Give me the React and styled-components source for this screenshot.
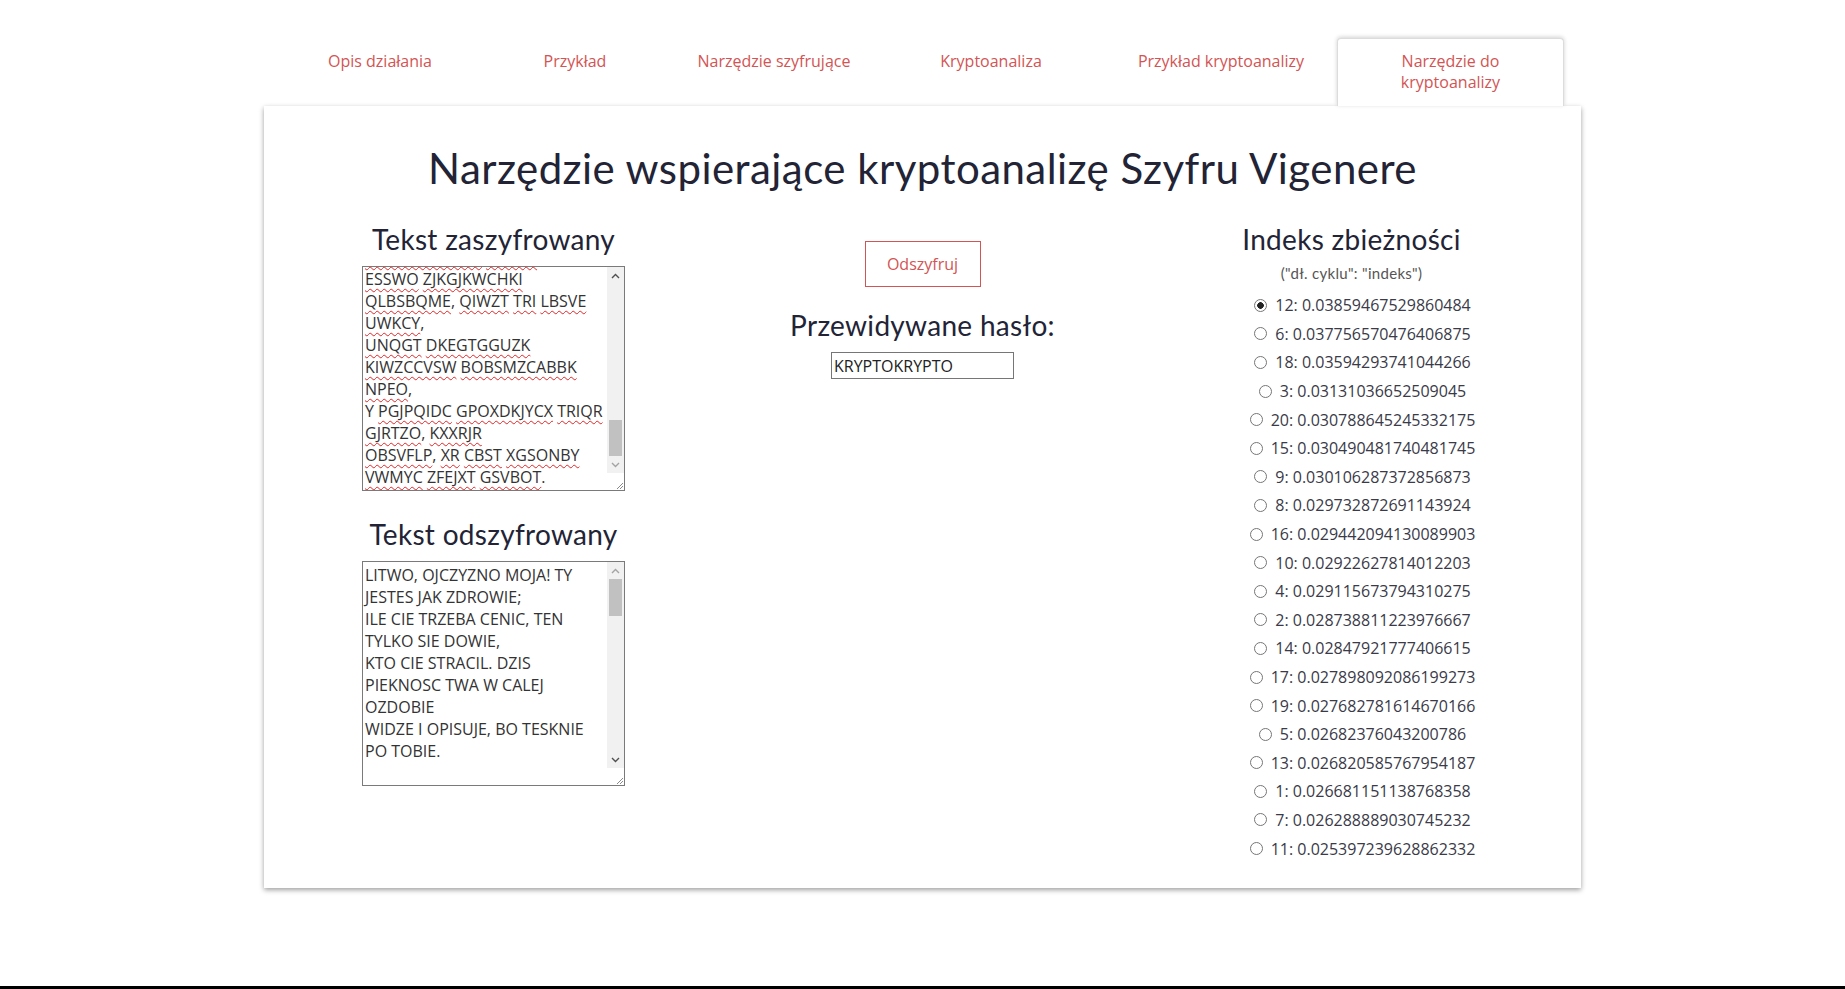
import React, { useLayoutEffect, useRef, useState } from 'react'
import styled, { createGlobalStyle } from 'styled-components'

const GlobalStyle = createGlobalStyle`
    html, body {
        margin: 0;
        padding: 0;
        background: #fff;
    }
    body {
        font-family: "Open Sans", "Liberation Sans", sans-serif;
        color: #333;
    }
`

const TABS = [
    { label: 'Opis działania', width: 198 },
    { label: 'Przykład', width: 192 },
    { label: 'Narzędzie szyfrujące', width: 206 },
    { label: 'Kryptoanaliza', width: 228 },
    { label: 'Przykład kryptoanalizy', width: 232 },
    { label: 'Narzędzie do kryptoanalizy', width: 227, active: true },
]

const PLAIN = [
    'LITWO, OJCZYZNO MOJA! TY JESTES JAK ZDROWIE;',
    'ILE CIE TRZEBA CENIC, TEN TYLKO SIE DOWIE,',
    'KTO CIE STRACIL. DZIS PIEKNOSC TWA W CALEJ OZDOBIE',
    'WIDZE I OPISUJE, BO TESKNIE PO TOBIE.',
    '',
    'PANNO SWIETA, CO JASNEJ BRONISZ CZESTOCHOWY',
    'I W OSTREJ SWIECISZ BRAMIE! TY, CO GROD ZAMKOWY',
    'NOWOGRODZKI OCHRANIASZ Z JEGO WIERNYM LUDEM!',
    'JAK MNIE DZIECKO DO ZDROWIA POWROCILAS CUDEM',
    '(GDY OD PLACZACEJ MATKI, POD TWOJE OPIEKE',
    'OFIAROWANY, MARTWA PODNIOSLEM POWIEKE;',
    'I ZARAZ MOGLEM PIESZO, DO TWYCH SWIATYN PROGU',
    'ISC ZA WROCONE ZYCIE PODZIEKOWAC BOGU),',
    'TAK NAS POWROCISZ CUDEM NA OJCZYZNY LONO.',
    'TYMCZASEM PRZENOS MOJA DUSZE UTESKNIONA',
    'DO TYCH PAGORKOW LESNYCH, DO TYCH LAK ZIELONYCH,',
    'SZEROKO NAD BLEKITNYM NIEMNEM ROZCIAGNIONYCH;',
    'DO TYCH POL MALOWANYCH ZBOZEM ROZMAITEM,',
    'WYZLACANYCH PSZENICA, POSREBRZANYCH ZYTEM;',
    'GDZIE BURSZTYNOWY SWIERZOP, GRYKA JAK SNIEG BIALA,',
    'GDZIE PANIENSKIM RUMIENCEM DZIECIELINA PALA,',
    'A WSZYSTKO PRZEPASANE JAKBY WSTEGA, MIEDZA',
    'ZIELONA, NA NIEJ ZRZADKA CICHE GRUSZE SIEDZA.',
].join('\n')

const KEY = 'KRYPTO'

// vigenere over every character position (spaces and newlines move the key too)
function encrypt(text) {
    const anchor = text.indexOf('GDZIE BURSZTYNOWY')
    const shift = (((2 - anchor) % 6) + 6) % 6
    return text
        .split('')
        .map((c, i) => {
            if (c < 'A' || c > 'Z') return c
            const k = KEY.charCodeAt((i + shift) % KEY.length) - 65
            return String.fromCharCode(((c.charCodeAt(0) - 65 + k) % 26) + 65)
        })
        .join('')
}

const CIPHER = encrypt(PLAIN)

const INDICES = [
    [12, '0.03859467529860484'],
    [6, '0.037756570476406875'],
    [18, '0.03594293741044266'],
    [3, '0.03131036652509045'],
    [20, '0.030788645245332175'],
    [15, '0.030490481740481745'],
    [9, '0.030106287372856873'],
    [8, '0.029732872691143924'],
    [16, '0.029442094130089903'],
    [10, '0.02922627814012203'],
    [4, '0.029115673794310275'],
    [2, '0.028738811223976667'],
    [14, '0.02847921777406615'],
    [17, '0.027898092086199273'],
    [19, '0.027682781614670166'],
    [5, '0.02682376043200786'],
    [13, '0.026820585767954187'],
    [1, '0.026681151138768358'],
    [7, '0.026288889030745232'],
    [11, '0.025397239628862332'],
]

const Page = styled.div`
    min-height: 100vh;
    display: flex;
    flex-direction: column;
`

const Nav = styled.ul`
    list-style: none;
    margin: 38px 0 0;
    padding: 0;
    display: flex;
    justify-content: center;
    align-items: stretch;
    position: relative;
    z-index: 2;
`

const Tab = styled.li`
    width: ${p => p.$width}px;
    box-sizing: border-box;
    padding: 12px ${p => (p.$active ? '40px' : '10px')};
    min-height: 68px;
    text-align: center;
    font-size: 16px;
    line-height: 21px;
    color: #d35454;
    cursor: pointer;
    background: ${p => (p.$active ? '#fff' : 'transparent')};
    border: 1px solid ${p => (p.$active ? '#dcdcdc' : 'transparent')};
    border-bottom: none;
    border-radius: 4px 4px 0 0;
    box-shadow: ${p => (p.$active ? '0 -1px 4px rgba(0, 0, 0, 0.18)' : 'none')};
`

const Card = styled.main`
    width: 1317px;
    box-sizing: border-box;
    margin: 0 auto;
    background: #fff;
    padding: 37px 15px 25px;
    box-shadow: 0 2px 5px rgba(0, 0, 0, 0.38);
`

const Title = styled.h1`
    margin: 0;
    font-family: Lato, "Open Sans", sans-serif;
    font-weight: 400;
    font-size: 42px;
    letter-spacing: 0.45px;
    line-height: 50px;
    text-align: center;
    color: #222436;
`

const Columns = styled.div`
    margin-top: 29px;
    display: grid;
    grid-template-columns: repeat(3, 1fr);
`

const Column = styled.section`
    display: flex;
    flex-direction: column;
    align-items: center;
`

const Heading = styled.h2`
    margin: ${p => p.$gap || 0}px 0 0;
    font-family: Lato, "Open Sans", sans-serif;
    font-weight: 400;
    font-size: 28px;
    letter-spacing: 0.3px;
    line-height: 34px;
    color: #222436;
    text-align: center;
`

const Field = styled.div`
    box-sizing: border-box;
    width: 263px;
    height: 225px;
    margin-top: 10px;
    border: 1px solid #7a7a7a;
    background: #fff;
    display: flex;
`

const fieldText = `
    flex: 1;
    min-width: 0;
    box-sizing: border-box;
    margin: 0;
    padding: 2px;
    border: none;
    font-family: "Open Sans", "Liberation Sans", sans-serif;
    font-size: 16px;
    line-height: 22px;
    color: #333;
    background: #fff;
    overflow: hidden;
    resize: none;
    white-space: pre-wrap;
    word-wrap: break-word;
    outline: none;
`

const CipherContent = styled.div`
    ${fieldText}
`

const PlainContent = styled.textarea`
    ${fieldText}
    display: block;
    height: 100%;
`

const Misspelled = styled.span`
    text-decoration: underline wavy #e32424;
    text-decoration-thickness: 1px;
    text-underline-offset: 3px;
    text-decoration-skip-ink: none;
`

const ScrollRail = styled.div`
    width: 17px;
    flex: none;
    display: flex;
    flex-direction: column;
    background: #f1f1f1;
`

const RailButton = styled.div`
    height: 17px;
    flex: none;
    display: flex;
    align-items: center;
    justify-content: center;
    color: ${p => (p.$disabled ? '#a3a3a3' : '#505050')};
`

const Track = styled.div`
    flex: 1;
    display: flex;
    flex-direction: column;
`

const Thumb = styled.div`
    margin: 0 2px;
    background: #c1c1c1;
    flex: none;
`

const Corner = styled.div`
    height: 17px;
    flex: none;
    background: #fff;
    display: flex;
    align-items: flex-end;
    justify-content: flex-end;
`

const DecryptButton = styled.button`
    margin-top: 19px;
    width: 116px;
    height: 46px;
    background: #fff;
    border: 1px solid #d35454;
    color: #d35454;
    font-family: "Open Sans", "Liberation Sans", sans-serif;
    font-size: 16px;
    cursor: pointer;
`

const KeyInput = styled.input`
    margin-top: 10px;
    box-sizing: border-box;
    width: 183px;
    height: 27px;
    padding: 1px 2px;
    border: 1px solid #767676;
    font-family: "Open Sans", "Liberation Sans", sans-serif;
    font-size: 16px;
    color: #222;
    outline: none;
`

const Note = styled.p`
    margin: 7px 0 0;
    font-family: Lato, "Open Sans", sans-serif;
    font-size: 15px;
    letter-spacing: 0.3px;
    line-height: 20px;
    color: #555;
`

const IndexList = styled.ul`
    list-style: none;
    margin: 8px 0 0;
    padding: 0 0 0 22px;
`

const IndexItem = styled.li`
    display: flex;
    justify-content: center;
    align-items: center;
    height: 28.6px;
    font-size: 16px;
    color: #3a3a48;
`

const Radio = styled.input`
    appearance: none;
    margin: 0 8px 0 0;
    width: 13px;
    height: 13px;
    border: 1px solid #767676;
    border-radius: 50%;
    background: #fff;
    flex: none;

    &:checked {
        background: radial-gradient(circle, #222 0 3px, #fff 3.6px);
    }
`

const Footer = styled.footer`
    margin-top: auto;
    height: 3px;
    background: #000;
`

function Chevron({ up }) {
    return (
        <svg width="9" height="6" viewBox="0 0 9 6">
            <path
                d={up ? 'M1 5 L4.5 1.5 L8 5' : 'M1 1 L4.5 4.5 L8 1'}
                fill="none"
                stroke="currentColor"
                strokeWidth="1.4"
            />
        </svg>
    )
}

function Grip() {
    return (
        <svg width="10" height="10" viewBox="0 0 10 10">
            <path d="M9 3 L3 9 M9 6 L6 9" stroke="#8a8a8a" strokeWidth="1" />
        </svg>
    )
}

// draws the field's own scrollbar, thumb sized from the content's scroll metrics
function ScrollField({ contentRef, toBottom, children }) {
    const [bar, setBar] = useState({ top: 0, size: 1, atTop: true, atBottom: false })

    useLayoutEffect(() => {
        const el = contentRef.current
        if (!el) return
        if (toBottom) el.scrollTop = el.scrollHeight
        const max = el.scrollHeight - el.clientHeight
        setBar({
            top: max > 0 ? el.scrollTop / max : 0,
            size: el.clientHeight / el.scrollHeight,
            atTop: el.scrollTop <= 0,
            atBottom: el.scrollTop >= max - 1,
        })
    }, [contentRef, toBottom])

    const track = 223 - 17 * 3
    const thumb = Math.max(17, Math.round(track * bar.size))
    const offset = Math.round((track - thumb) * bar.top)

    return (
        <Field>
            {children}
            <ScrollRail>
                <RailButton $disabled={bar.atTop}>
                    <Chevron up />
                </RailButton>
                <Track>
                    <Thumb style={{ marginTop: offset, height: thumb }} />
                </Track>
                <RailButton $disabled={bar.atBottom}>
                    <Chevron />
                </RailButton>
                <Corner>
                    <Grip />
                </Corner>
            </ScrollRail>
        </Field>
    )
}

function CipherText() {
    const ref = useRef(null)
    return (
        <ScrollField contentRef={ref} toBottom>
            <CipherContent ref={ref} role="textbox" contentEditable suppressContentEditableWarning spellCheck>
                {CIPHER.split(/([A-Z]+)/).map((part, i) =>
                    /^[A-Z]{2,}$/.test(part) ? <Misspelled key={i}>{part}</Misspelled> : part
                )}
            </CipherContent>
        </ScrollField>
    )
}

function PlainText() {
    const ref = useRef(null)
    return (
        <ScrollField contentRef={ref}>
            <PlainContent ref={ref} readOnly value={PLAIN} spellCheck={false} />
        </ScrollField>
    )
}

export default function App() {
    const [picked, setPicked] = useState(12)
    const [key, setKey] = useState('KRYPTOKRYPTO')

    return (
        <Page>
            <GlobalStyle />
            <Nav>
                {TABS.map(tab => (
                    <Tab key={tab.label} $width={tab.width} $active={tab.active}>
                        {tab.label}
                    </Tab>
                ))}
            </Nav>
            <Card>
                <Title>Narzędzie wspierające kryptoanalizę Szyfru Vigenere</Title>
                <Columns>
                    <Column>
                        <Heading>Tekst zaszyfrowany</Heading>
                        <CipherText />
                        <Heading $gap={26}>Tekst odszyfrowany</Heading>
                        <PlainText />
                    </Column>
                    <Column>
                        <DecryptButton>Odszyfruj</DecryptButton>
                        <Heading $gap={21}>Przewidywane hasło:</Heading>
                        <KeyInput value={key} onChange={e => setKey(e.target.value)} />
                    </Column>
                    <Column>
                        <Heading>Indeks zbieżności</Heading>
                        <Note>("dł. cyklu": "indeks")</Note>
                        <IndexList>
                            {INDICES.map(([len, val]) => (
                                <IndexItem key={len}>
                                    <Radio
                                        type="radio"
                                        name="cycle"
                                        checked={picked === len}
                                        onChange={() => setPicked(len)}
                                    />
                                    <span>
                                        {len}: {val}
                                    </span>
                                </IndexItem>
                            ))}
                        </IndexList>
                    </Column>
                </Columns>
            </Card>
            <Footer />
        </Page>
    )
}
